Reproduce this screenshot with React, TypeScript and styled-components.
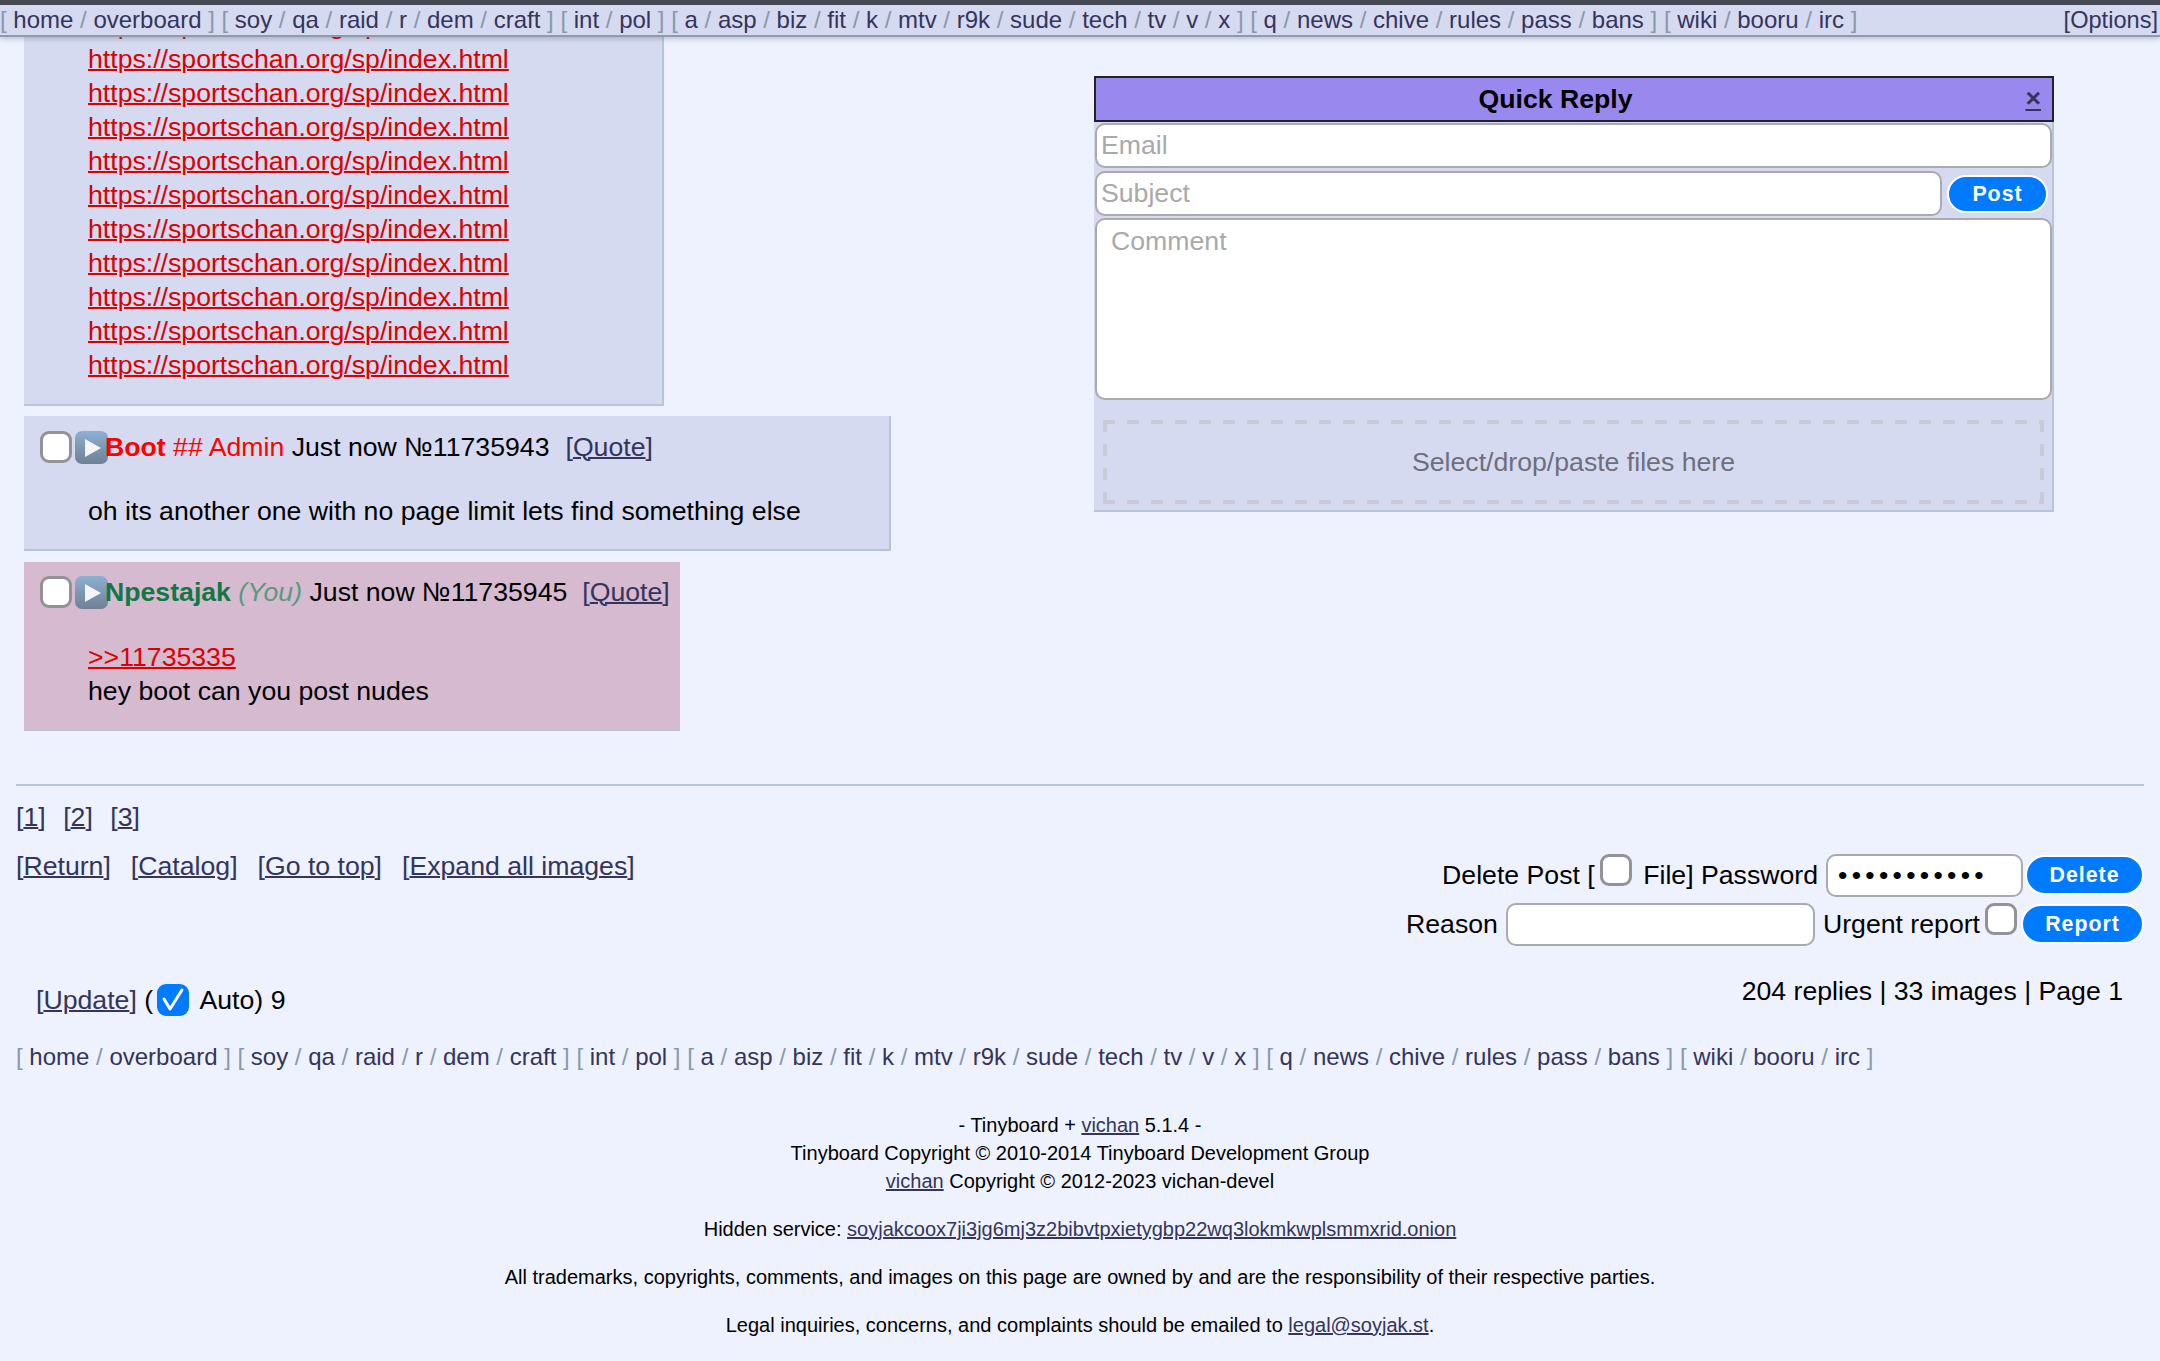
import React from "react";
import styled, { createGlobalStyle } from "styled-components";

const Global = createGlobalStyle`
  html, body { margin: 0; padding: 0; background: #eef2ff; }
  body { font-family: "Liberation Sans", Arial, sans-serif; font-size: 26.67px; color: #000; }
  input::placeholder, textarea::placeholder { color: #a9a9a9; opacity: 1; }
`;

const Page = styled.div`
  position: relative;
  width: 2160px;
  height: 1361px;
  overflow: hidden;
  background: #eef2ff;
`;

const TopBar = styled.div`
  position: absolute;
  z-index: 5;
  top: 0;
  left: 0;
  right: 0;
  height: 30px;
  border-top: 5px solid #464853;
  border-bottom: 2px solid #8d9cab;
  box-shadow: 0 2px 5px rgba(90, 100, 120, 0.35);
  background: #d6daf0;
  display: flex;
  justify-content: space-between;
  align-items: center;
  padding: 0 2px 0 0;
`;

const NavText = styled.div`
  font-size: 24px;
  line-height: 30px;
  white-space: pre;
  color: #8899aa;
`;

const NavLink = styled.a`
  color: #34345c;
  text-decoration: none;
`;

const OptionsLink = styled.a`
  font-size: 23.6px;
  line-height: 30px;
  color: #34345c;
`;

const Thread = styled.div`
  padding-left: 24px;
  display: flex;
  flex-direction: column;
  align-items: flex-start;
`;

const Post = styled.div<{ $w: number; $hl?: boolean }>`
  box-sizing: border-box;
  width: ${(p) => p.$w}px;
  background: ${(p) => (p.$hl ? "#d6bad0" : "#d6daf0")};
  border-right: 2px solid ${(p) => (p.$hl ? "#d6bad0" : "#b7c5d9")};
  border-bottom: 2px solid #b7c5d9;
`;

const LinkPost = styled(Post)`
  padding: 8px 0 22px 64px;
  margin-bottom: 10px;
`;

const ReplyPost = styled(Post)<{ $pt: number }>`
  padding: ${(p) => p.$pt}px 0 0 16px;
  margin-bottom: 11px;
`;

const RedLink = styled.a`
  display: block;
  width: fit-content;
  line-height: 34px;
  color: #dd0000;
  text-decoration: underline;
  text-decoration-thickness: 2px;
`;

const Head = styled.div`
  display: flex;
  align-items: center;
  height: 34px;
  white-space: pre;
`;

const Check = styled.input.attrs({ type: "checkbox" })`
  appearance: none;
  box-sizing: border-box;
  flex: none;
  display: inline-block;
  width: 32px;
  height: 32px;
  margin: 0;
  background: #fff;
  border: 3px solid #929298;
  border-radius: 9px;
`;

const CheckOn = styled.span`
  flex: none;
  display: inline-flex;
  width: 32px;
  height: 32px;
  margin-left: 4px;
  background: #007aff;
  border-radius: 9px;
`;

const PlayBox = styled.svg`
  flex: none;
  width: 33px;
  height: 33px;
  margin-left: 3px;
  margin-right: -3px;
`;

const Name = styled.b<{ $c: string }>`
  color: ${(p) => p.$c};
`;

const Cap = styled.span`
  color: #ff0000;
`;

const You = styled.i`
  color: #5a9a7c;
`;

const Bracket = styled.span<{ $ml?: number }>`
  color: #34345c;
  margin-left: ${(p) => p.$ml ?? 0}px;
  white-space: pre;
`;

const Under = styled.a`
  color: #34345c;
  text-decoration: underline;
  text-decoration-thickness: 2px;
`;

const PostBody = styled.div<{ $pt: number; $pb: number }>`
  padding: ${(p) => p.$pt}px 0 ${(p) => p.$pb}px 48px;
  line-height: 34px;
`;

const Lower = styled.div`
  padding: 42px 16px 0 16px;
`;

const Rule = styled.div`
  height: 2px;
  background: #b7c5d9;
`;

const Controls = styled.div`
  display: flex;
  justify-content: space-between;
  height: 188px;
`;

const LeftCol = styled.div`
  padding-top: 14px;
  line-height: 34px;
`;

const PageRow = styled.div`
  display: flex;
  gap: 17.5px;
  margin-bottom: 15px;
`;

const LinkRow = styled.div`
  display: flex;
  gap: 20px;
`;

const RightCol = styled.div`
  padding-top: 68px;
  display: flex;
  flex-direction: column;
  align-items: flex-end;
  gap: 6px;
`;

const FormRow = styled.div`
  display: flex;
  align-items: flex-start;
  height: 43px;
  white-space: pre;
`;

const FormLabel = styled.span<{ $ml?: number; $mr?: number }>`
  line-height: 42px;
  margin-left: ${(p) => p.$ml ?? 0}px;
  margin-right: ${(p) => p.$mr ?? 0}px;
`;

const Field = styled.input<{ $w?: number }>`
  box-sizing: border-box;
  width: ${(p) => (p.$w ? `${p.$w}px` : "100%")};
  height: 43px;
  margin: 0;
  padding: 0 8px;
  background: #fff;
  border: 2px solid #a9a9ae;
  border-radius: 10px;
  font: inherit;
  outline: none;
  flex: ${(p) => (p.$w ? "none" : "1")};
  min-width: 0;
`;

const PassField = styled(Field)`
  padding: 0 10px;
  letter-spacing: 4.3px;
`;

const Btn = styled.button<{ $w: number; $ml?: number }>`
  box-sizing: border-box;
  flex: none;
  width: ${(p) => p.$w}px;
  height: 40px;
  margin: 1px 0 0 ${(p) => p.$ml ?? 2}px;
  padding: 0;
  background: #007bff;
  color: #fff;
  border: 2px solid #fff;
  border-radius: 20px;
  font-family: inherit;
  font-size: 21.33px;
  font-weight: bold;
  letter-spacing: 1px;
`;

const StatusRow = styled.div`
  display: flex;
  justify-content: space-between;
  height: 46px;
`;

const UpdateBox = styled.div`
  display: flex;
  align-items: center;
  padding-left: 20px;
  height: 32px;
  margin-top: 10px;
  white-space: pre;
`;

const AutoText = styled.span`
  margin-left: 4.5px;
`;

const Stats = styled.div`
  line-height: 34px;
  padding-right: 21px;
`;

const BottomNav = styled(NavText)`
  margin-top: 20px;
  line-height: 34px;
`;

const Footer = styled.div`
  margin-top: 37px;
  text-align: center;
  font-size: 20px;
  line-height: 28px;
`;

const FootPara = styled.p`
  margin: 0 0 20px;
`;

const FootLink = styled.a`
  color: #34345c;
  text-decoration: underline;
`;

const Quick = styled.div`
  position: absolute;
  z-index: 4;
  left: 1094px;
  top: 76px;
  box-sizing: border-box;
  width: 960px;
  height: 436px;
  background: #d6daf0;
  border-right: 2px solid #b7c5d9;
  border-bottom: 2px solid #b7c5d9;
  display: flex;
  flex-direction: column;
`;

const QuickHead = styled.div`
  box-sizing: border-box;
  flex: none;
  width: 960px;
  height: 46px;
  background: #9988ee;
  border: 2px solid #222;
  display: flex;
  align-items: center;
`;

const QuickTitle = styled.b`
  flex: 1;
  text-align: center;
`;

const Close = styled.a`
  width: 37px;
  padding-right: 11px;
  box-sizing: border-box;
  text-align: right;
  font-size: 26.67px;
  line-height: 30px;
  font-weight: bold;
  color: #34345c;
  text-decoration: underline;
  margin-top: -2px;
`;

const QuickRow = styled.div`
  display: flex;
  align-items: flex-start;
  margin: 1px 0 0 1px;
  width: 957px;
  height: 46px;
  & + & {
    margin-top: 2px;
  }
`;

const QuickField = styled(Field)`
  height: 45px;
  padding: 0 4px;
`;

const Post2 = styled(Btn)`
  height: 38px;
  border-radius: 19px;
  margin: 4px 4px 0 5px;
`;

const Comment = styled.textarea`
  display: block;
  box-sizing: border-box;
  flex: none;
  width: 957px;
  height: 182px;
  margin: 1px 0 0 1px;
  padding: 6px 14px;
  background: #fff;
  border: 2px solid #a9a9ae;
  border-radius: 10px;
  font: inherit;
  resize: none;
  outline: none;
`;

const dashH = "repeating-linear-gradient(90deg, #c9cad8 0 12px, transparent 12px 24px)";
const dashV = "repeating-linear-gradient(0deg, #c9cad8 0 12px, transparent 12px 24px)";

const Drop = styled.div`
  box-sizing: border-box;
  width: 941px;
  height: 84px;
  margin: 20px 0 0 9px;
  background-image: ${dashH}, ${dashH}, ${dashV}, ${dashV};
  background-size: 100% 4px, 100% 4px, 4px 100%, 4px 100%;
  background-position: 0 0, 0 100%, 0 0, 100% 0;
  background-repeat: no-repeat;
  display: flex;
  align-items: center;
  justify-content: center;
  color: #6e6e7c;
`;

const Play = ({ id }: { id: string }) => (
  <PlayBox viewBox="0 0 33 33">
    <defs>
      <linearGradient id={id} x1="0" y1="0" x2="0" y2="1">
        <stop offset="0" stopColor="#8db0d2" />
        <stop offset="1" stopColor="#6f8094" />
      </linearGradient>
    </defs>
    <rect x="0" y="0" width="33" height="33" rx="7" fill={`url(#${id})`} />
    <path d="M10 8 L26 17 L10 26 Z" fill="#f4f4fa" />
  </PlayBox>
);

const boards = [
  ["home", "overboard"],
  ["soy", "qa", "raid", "r", "dem", "craft"],
  ["int", "pol"],
  ["a", "asp", "biz", "fit", "k", "mtv", "r9k", "sude", "tech", "tv", "v", "x"],
  ["q", "news", "chive", "rules", "pass", "bans"],
  ["wiki", "booru", "irc"],
];

const BoardList = () => (
  <>
    {boards.map((set, i) => (
      <React.Fragment key={i}>
        {i > 0 ? " " : ""}[{" "}
        {set.map((b, j) => (
          <React.Fragment key={b}>
            {j > 0 ? " / " : null}
            <NavLink>{b}</NavLink>
          </React.Fragment>
        ))}{" "}
        ]
      </React.Fragment>
    ))}
  </>
);

const Br = ({ children, ml }: { children: React.ReactNode; ml?: number }) => (
  <Bracket $ml={ml}>
    [<Under>{children}</Under>]
  </Bracket>
);

export default function App() {
  return (
    <Page>
      <Global />
      <TopBar>
        <NavText>
          <BoardList />
        </NavText>
        <OptionsLink>[Options]</OptionsLink>
      </TopBar>

      <Thread>
        <LinkPost $w={640}>
          {Array.from({ length: 11 }).map((_, i) => (
            <RedLink key={i}>https://sportschan.org/sp/index.html</RedLink>
          ))}
        </LinkPost>

        <ReplyPost $w={867} $pt={14}>
          <Head>
            <Check />
            <Play id="pa" />
            <Name $c="#ff0000">Boot</Name>
            <Cap> ## Admin</Cap>
            <span> Just now №11735943</span>
            <Br ml={16}>Quote</Br>
          </Head>
          <PostBody $pt={30} $pb={21}>
            oh its another one with no page limit lets find something else
          </PostBody>
        </ReplyPost>

        <ReplyPost $w={656} $hl $pt={13}>
          <Head>
            <Check />
            <Play id="pb" />
            <Name $c="#117743">Npestajak</Name>
            <You> (You)</You>
            <span> Just now №11735945</span>
            <Br ml={15}>Quote</Br>
          </Head>
          <PostBody $pt={31} $pb={21}>
            <RedLink>&gt;&gt;11735335</RedLink>
            hey boot can you post nudes
          </PostBody>
        </ReplyPost>
      </Thread>

      <Lower>
        <Rule />
        <Controls>
          <LeftCol>
            <PageRow>
              <Br>1</Br>
              <Br>2</Br>
              <Br>3</Br>
            </PageRow>
            <LinkRow>
              <Br>Return</Br>
              <Br>Catalog</Br>
              <Br>Go to top</Br>
              <Br>Expand all images</Br>
            </LinkRow>
          </LeftCol>
          <RightCol>
            <FormRow>
              <FormLabel $mr={5}>Delete Post [</FormLabel>
              <Check />
              <FormLabel $ml={11.5} $mr={8}>File] Password</FormLabel>
              <PassField $w={197} type="password" defaultValue="hunter22222" readOnly />
              <Btn $w={119}>Delete</Btn>
            </FormRow>
            <FormRow>
              <FormLabel $mr={8}>Reason</FormLabel>
              <Field $w={309} />
              <FormLabel $ml={8} $mr={5}>Urgent report</FormLabel>
              <Check />
              <Btn $w={123} $ml={4}>Report</Btn>
            </FormRow>
          </RightCol>
        </Controls>
        <StatusRow>
          <UpdateBox>
            <Br>Update</Br>
            <span> (</span>
            <CheckOn>
              <svg width="32" height="32" viewBox="0 0 32 32" fill="none">
                <path d="M7 15 L13 25 L25 6" stroke="#fff" strokeWidth="3" strokeLinecap="round" strokeLinejoin="round" />
              </svg>
            </CheckOn>
            <AutoText> Auto) 9</AutoText>
          </UpdateBox>
          <Stats>204 replies | 33 images | Page 1</Stats>
        </StatusRow>
        <BottomNav>
          <BoardList />
        </BottomNav>
        <Footer>
          <FootPara>
            - Tinyboard + <FootLink>vichan</FootLink> 5.1.4 -
            <br />
            Tinyboard Copyright © 2010-2014 Tinyboard Development Group
            <br />
            <FootLink>vichan</FootLink> Copyright © 2012-2023 vichan-devel
          </FootPara>
          <FootPara>
            Hidden service: <FootLink>soyjakcoox7ji3jg6mj3z2bibvtpxietygbp22wq3lokmkwplsmmxrid.onion</FootLink>
          </FootPara>
          <FootPara>
            All trademarks, copyrights, comments, and images on this page are owned by and are the responsibility of their respective parties.
          </FootPara>
          <FootPara>
            Legal inquiries, concerns, and complaints should be emailed to <FootLink>legal@soyjak.st</FootLink>.
          </FootPara>
        </Footer>
      </Lower>

      <Quick>
        <QuickHead>
          <QuickTitle>Quick Reply</QuickTitle>
          <Close>×</Close>
        </QuickHead>
        <QuickRow>
          <QuickField placeholder="Email" />
        </QuickRow>
        <QuickRow>
          <QuickField placeholder="Subject" />
          <Post2 $w={101}>Post</Post2>
        </QuickRow>
        <Comment placeholder="Comment" />
        <Drop>Select/drop/paste files here</Drop>
      </Quick>
    </Page>
  );
}
